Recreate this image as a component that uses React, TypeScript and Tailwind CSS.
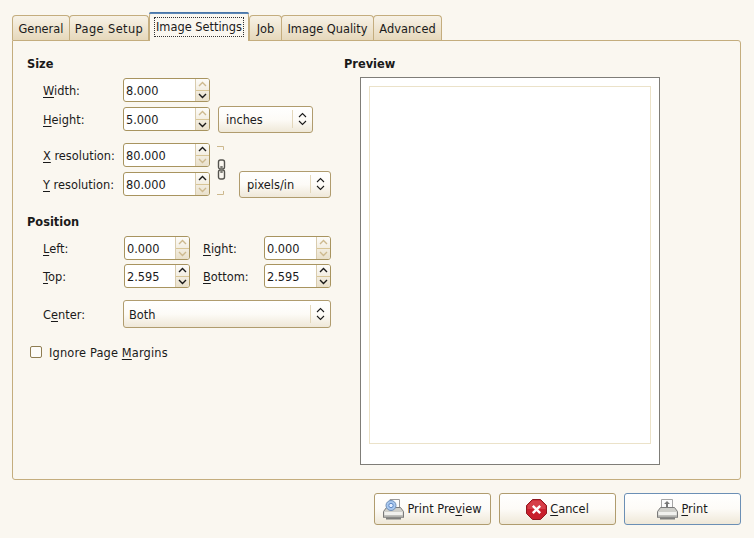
const font = "[font-family:'DejaVu_Sans',sans-serif]";

function Tab({ label, w, active, className = "" }: { label: string; w: string; active?: boolean; className?: string }) {
  if (active) {
    return (
      <div className={`${w} h-[29px] -mb-px relative z-10 rounded-t-[4px] border-x border-[#c4ad7e] bg-[#faf7f0] flex flex-col`}>
        <div className="h-[2px] -mx-px rounded-t-[4px] bg-[#5b86b5] border-t border-[#4a76a8]" />
        <div className="mx-[4px] mt-[3px] h-[20px] pt-[2px] border border-dotted border-[#333] flex items-center justify-center whitespace-nowrap text-[#1a1a1a]">
          {label}
        </div>
      </div>
    );
  }
  return (
    <div className={`${w} ${className} h-[25px] pt-[4px] rounded-t-[4px] border border-b-0 border-[#c4ad7e] bg-gradient-to-b from-[#f7f2e7] to-[#e6d8bb] flex items-center justify-center whitespace-nowrap text-[#1a1a1a]`}>
      {label}
    </div>
  );
}

function U({ children }: { children: string }) {
  return <span className="underline underline-offset-2">{children}</span>;
}

function Label({ children, w = "w-[80px]", className = "" }: { children: React.ReactNode; w?: string; className?: string }) {
  return <div className={`${w} pt-[3px] ${className}`}>{children}</div>;
}

function Arrow({ up, off, thin }: { up?: boolean; off?: boolean; thin?: boolean }) {
  return (
    <svg width="9" height="6" viewBox="0 0 9 6" className="block">
      <path d={up ? "M1 5 L4.5 1.5 L8 5" : "M1 1 L4.5 4.5 L8 1"} fill="none" stroke={off ? "#cdb98e" : "#1a1a1a"} strokeWidth={thin ? 1.1 : 1.4} />
    </svg>
  );
}

function Spin({ value, w, upOff, downOff }: { value: string; w: string; upOff?: boolean; downOff?: boolean }) {
  return (
    <div className={`${w} h-[24px] shrink-0 flex rounded-[3px] border border-[#a8945f] overflow-hidden bg-white`}>
      <div className="flex-1 pl-[2px] pt-[3px] flex items-center text-[#1a1a1a]">{value}</div>
      <div className="w-[14px] flex flex-col border-l border-[#d9ccae] bg-gradient-to-b from-[#fdfcf9] to-[#e9e0cb]">
        <div className="flex-1 flex items-center justify-center border-b border-[#d8c596]">
          <Arrow up off={upOff} />
        </div>
        <div className="flex-1 flex items-center justify-center">
          <Arrow off={downOff} />
        </div>
      </div>
    </div>
  );
}

function Combo({ label, w, h = "h-[27px]", pad = "pl-[7px]" }: { label: string; w: string; h?: string; pad?: string }) {
  return (
    <div className={`${w} ${h} shrink-0 flex items-center rounded-[3px] border border-[#b09c6e] bg-gradient-to-b from-white via-[#fdfbf7] to-[#efe8d8] text-[#1a1a1a]`}>
      <div className={`flex-1 pt-[3px] ${pad}`}>{label}</div>
      <div className="w-px h-[18px] bg-[#e3d7bb]" />
      <div className="w-[19px] flex flex-col items-center gap-[2px]">
        <Arrow up thin />
        <Arrow thin />
      </div>
    </div>
  );
}

function Row({ children, className = "" }: { children: React.ReactNode; className?: string }) {
  return <div className={`flex items-center h-[24px] ${className}`}>{children}</div>;
}

function ChainBracket() {
  return (
    <svg width="10" height="50" viewBox="0 0 10 50" className="block">
      <path d="M0 0.5 H6.5 V4" fill="none" stroke="#cdb98e" />
      <path d="M0 48.5 H6.5 V45" fill="none" stroke="#cdb98e" />
      <rect x="1.5" y="14" width="6" height="9" rx="2" fill="none" stroke="#55544f" strokeWidth="1.4" />
      <rect x="1.5" y="24" width="6" height="9" rx="2" fill="none" stroke="#55544f" strokeWidth="1.4" />
      <path d="M4.5 20 V27" stroke="#7c7b75" strokeWidth="2.4" />
    </svg>
  );
}

function PrinterBase() {
  return (
    <>
      <path d="M3.5 8.5 H17.5 L20.5 12.5 V18.5 H0.5 V12.5 Z" fill="#cfcfca" stroke="#7a7a7a" />
      <rect x="1.5" y="13" width="18" height="3" fill="#f1f1ee" />
      <rect x="1" y="16.5" width="19" height="2" fill="#b2b2ae" />
      <rect x="3" y="18.5" width="15" height="2" fill="#7f7f7d" />
    </>
  );
}

function PreviewIcon() {
  return (
    <svg width="21" height="21" viewBox="0 0 21 21">
      <path d="M7 0.5 H16.5 V10 H7 Z" fill="#fbfbfb" stroke="#9a9a9a" />
      <PrinterBase />
      <circle cx="8" cy="6.5" r="5" fill="#a9c8ee" stroke="#6f8fb8" />
      <circle cx="8" cy="6.5" r="2.2" fill="#e4efff" stroke="#5b86c5" />
    </svg>
  );
}

function PrintIcon() {
  return (
    <svg width="21" height="21" viewBox="0 0 21 21">
      <path d="M4.5 0.5 H15.5 V9 H4.5 Z" fill="#fbfbfb" stroke="#a5a5a5" />
      <path d="M10 2 L13 5 H11 V8 H9 V5 H7 Z" fill="#777" />
      <PrinterBase />
    </svg>
  );
}

function CancelIcon() {
  return (
    <svg width="21" height="21" viewBox="0 0 21 21">
      <path d="M6.5 0.5 H14.5 L20.5 6.5 V14.5 L14.5 20.5 H6.5 L0.5 14.5 V6.5 Z" fill="#c8202c" stroke="#8f1820" />
      <path d="M6.5 1.5 H14.5 L19.5 6.5 V10 H1.5 V6.5 Z" fill="#e0545c" opacity="0.6" />
      <path d="M6.8 6.8 L14.2 14.2 M14.2 6.8 L6.8 14.2" stroke="#fff" strokeWidth="2.4" />
    </svg>
  );
}

function Button({ children, blue }: { children: React.ReactNode; blue?: boolean }) {
  return (
    <div className={`w-[117px] h-[32px] flex items-center justify-center gap-[3px] rounded-[3px] border ${blue ? "border-[#6b8fb5]" : "border-[#b09c6e]"} bg-gradient-to-b from-white via-[#fdfbf7] to-[#efe8d8] text-[#1a1a1a]`}>
      {children}
    </div>
  );
}

export default function App() {
  return (
    <div className={`${font} w-[754px] h-[538px] bg-[#faf7f0] pt-[12px] pl-[12px] pr-[13px] text-[11.4px] text-[#1a1a1a] overflow-hidden`}>
      <div className="flex items-end h-[28px] w-full">
        <Tab label="General" w="w-[58px]" />
        <Tab label="Page Setup" w="w-[80px] -ml-px" className="tracking-[0.4px]" />
        <Tab label="Image Settings" w="w-[100px]" active />
        <Tab label="Job" w="w-[33px]" />
        <Tab label="Image Quality" w="w-[93px] -ml-px" />
        <Tab label="Advanced" w="w-[69px] -ml-px" />
      </div>

      <div className="w-[729px] h-[440px] rounded-b-[3px] rounded-tr-[3px] border border-[#c4ad7e] flex pt-[16px] pl-[14px]">
        <div className="w-[317px]">
          <div className="font-bold leading-[14px]">Size</div>
          <div className="mt-[7px] pl-[16px]">
            <Row>
              <Label><U>W</U>idth:</Label>
              <Spin value="8.000" w="w-[87px]" upOff />
            </Row>
            <Row className="mt-[5px]">
              <Label><U>H</U>eight:</Label>
              <Spin value="5.000" w="w-[87px]" upOff />
              <Combo label="inches" w="w-[95px] ml-[8px]" />
            </Row>
            <div className="mt-[12px] flex">
              <div>
                <Row>
                  <Label><U>X</U> resolution:</Label>
                  <Spin value="80.000" w="w-[87px]" downOff />
                </Row>
                <Row className="mt-[5px]">
                  <Label><U>Y</U> resolution:</Label>
                  <Spin value="80.000" w="w-[87px]" downOff />
                </Row>
              </div>
              <div className="ml-[7px] pt-[3px]"><ChainBracket /></div>
              <div className="ml-[12px] h-[24px] self-end flex items-center"><Combo label="pixels/in" w="w-[92px]" /></div>
            </div>
          </div>

          <div className="font-bold leading-[14px] mt-[19px]">Position</div>
          <div className="mt-[7px] pl-[16px]">
            <Row>
              <Label w="w-[81px]"><U>L</U>eft:</Label>
              <Spin value="0.000" w="w-[66px]" upOff downOff />
              <Label w="w-[61px]" className="ml-[13px]"><U>R</U>ight:</Label>
              <Spin value="0.000" w="w-[67px]" upOff downOff />
            </Row>
            <Row className="mt-[4px]">
              <Label w="w-[81px]"><U>T</U>op:</Label>
              <Spin value="2.595" w="w-[66px]" />
              <Label w="w-[61px]" className="ml-[13px]"><U>B</U>ottom:</Label>
              <Spin value="2.595" w="w-[67px]" />
            </Row>
            <Row className="mt-[14px]">
              <Label>C<U>e</U>nter:</Label>
              <Combo label="Both" w="w-[208px]" h="h-[28px]" pad="pl-[5px]" />
            </Row>
          </div>
          <div className="flex items-center mt-[16px] pl-[3px]">
            <div className="w-[12px] h-[12px] rounded-[2px] border border-[#8f7d52] bg-[#fdfcf9]" />
            <div className="ml-[7px] pt-[3px] tracking-[0.15px]">Ignore Page <U>M</U>argins</div>
          </div>
        </div>

        <div>
          <div className="font-bold leading-[14px]">Preview</div>
          <div className="mt-[6px] ml-[16px] w-[300px] h-[388px] border border-[#7f7d78] bg-white pt-[8px] pl-[8px]">
            <div className="w-[282px] h-[358px] border border-[#ebe2c9]" />
          </div>
        </div>
      </div>

      <div className="mt-[13px] flex justify-end gap-[8px]">
        <Button><PreviewIcon /><span className="pt-[2px]">Print Pre<U>v</U>iew</span></Button>
        <Button><CancelIcon /><span className="pt-[2px]"><U>C</U>ancel</span></Button>
        <Button blue><PrintIcon /><span className="pt-[2px]"><U>P</U>rint</span></Button>
      </div>
    </div>
  );
}
